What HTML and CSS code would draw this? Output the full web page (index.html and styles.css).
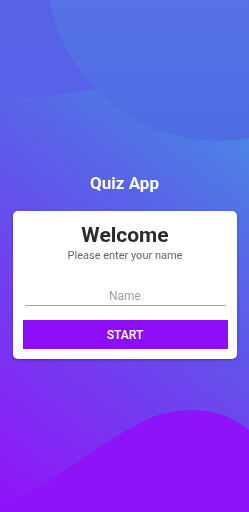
FILE: index.html
```html
<!DOCTYPE html>
<html lang="en">
<head>
    <meta charset="UTF-8">
    <meta name="viewport" content="width=device-width, initial-scale=1.0">
    <title>Quiz App</title>
    <link rel="stylesheet" href="styles.css">
</head>
<body>

    <!-- background shapes -->
    <svg class="bg" viewBox="0 0 249 512" preserveAspectRatio="none">
        <defs>
            <linearGradient id="topCircle" x1="0" y1="0" x2="0" y2="1">
                <stop offset="0" stop-color="#6479e9"/>
                <stop offset="1" stop-color="#4e6de4"/>
            </linearGradient>
            <linearGradient id="topLeft" x1="0" y1="0" x2="0" y2="1">
                <stop offset="0" stop-color="#5066e6"/>
                <stop offset="1" stop-color="#5862e8"/>
            </linearGradient>
        </defs>
        <circle cx="0" cy="-400" r="498" fill="url(#topLeft)"/>
        <circle cx="218" cy="-30" r="171" fill="url(#topCircle)"/>
        <path d="M0 510 C60 478 110 436 150 418 C175 408 205 408 225 416 C235 420 244 426 249 430 V512 H0 Z" fill="#8e13f8"/>
    </svg>

    <div class="screen">
        <h1 class="app-title">Quiz App</h1>

        <div class="card">
            <h2 class="welcome">Welcome</h2>
            <p class="subtitle">Please enter your name</p>
            <input type="text" class="name-input" placeholder="Name">
            <button class="start-btn">START</button>
        </div>
    </div>

</body>
</html>
```

FILE: styles.css
```css
html, body {
    height: 100%;
}

body {
    font-family: Roboto, 'Noto Sans', sans-serif;
    margin: 0;
    padding: 0;
    overflow: hidden;
    background: linear-gradient(218deg, #3fa0e0 0%, #5e59e9 48%, #9212f8 100%);
}

.bg {
    position: fixed;
    top: 0;
    left: 0;
    width: 100%;
    height: 100%;
    z-index: 0;
}

.screen {
    position: relative;
    z-index: 1;
    display: flex;
    flex-direction: column;
    align-items: center;
    padding-top: 173px;
}

.app-title {
    margin: 0;
    color: white;
    font-size: 17px;
    line-height: 20px;
    font-weight: 700;
}

.card {
    box-sizing: border-box;
    width: 224px;
    margin-top: 18px;
    padding: 12px 9px 10px 10px;
    background-color: white;
    border-radius: 5px;
    box-shadow: 0 1px 3px rgba(0, 0, 0, 0.3);
    display: flex;
    flex-direction: column;
    text-align: center;
}

.welcome {
    margin: 0;
    color: #2b2b2b;
    font-size: 21px;
    line-height: 25px;
    font-weight: 700;
}

.subtitle {
    margin: 1px 0 0;
    color: #666666;
    font-size: 11px;
    line-height: 13px;
}

.name-input {
    box-sizing: border-box;
    margin: 18px 2px 0;
    height: 26px;
    padding: 6px 0 0;
    border: none;
    border-bottom: 1px solid #a0a0a0;
    outline: none;
    background: transparent;
    font-family: Roboto, sans-serif;
    font-size: 12px;
    color: #333;
    text-align: center;
}

.name-input::placeholder {
    color: #9e9e9e;
}

.start-btn {
    margin-top: 14px;
    height: 29px;
    border: none;
    border-radius: 0;
    background-color: #8e0ff7;
    color: white;
    font-family: Roboto, sans-serif;
    font-size: 12px;
    font-weight: 500;
    cursor: pointer;
}
```
